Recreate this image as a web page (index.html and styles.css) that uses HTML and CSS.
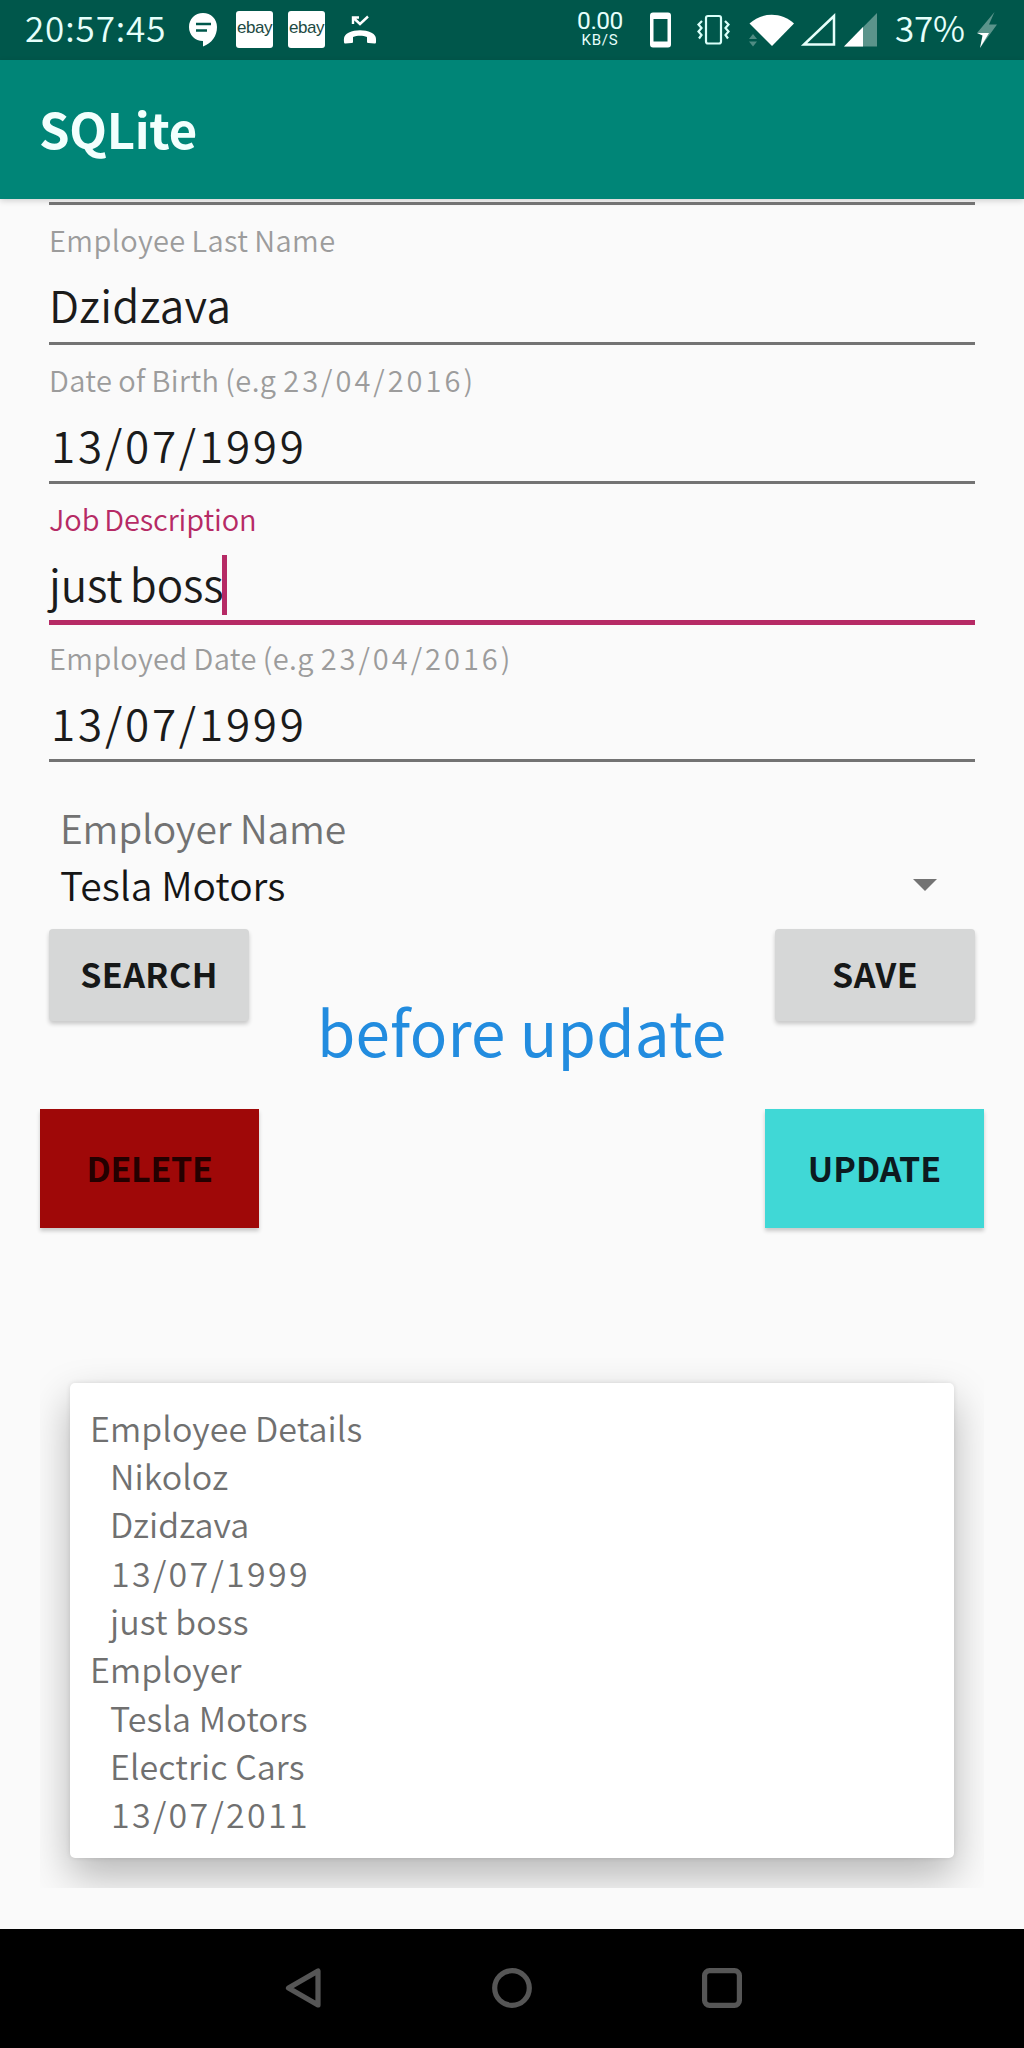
FILE: index.html
```html
<!DOCTYPE html>
<html lang="en">
<head>
<meta charset="utf-8">
<title>SQLite</title>
<link rel="stylesheet" href="styles.css">
</head>
<body>
<div class="screen">
  <header class="status-bar">
    <span class="clock">20:57:45</span>
    <svg class="chat-icon" width="30" height="36" viewBox="0 0 30 36">
      <path d="M15 1C7 1 1 7 1 15s6 14 14 14v5.500C24 31 29 24 29 15 29 7 23 1 15 1Z" fill="#fff"/>
      <path d="M8 12h15M8 18.500h11" stroke="#00574b" stroke-width="2.400"/>
    </svg>
    <span class="ebay">ebay</span>
    <span class="ebay">ebay</span>
    <svg class="missed-icon" width="34" height="30" viewBox="0 0 34 30">
      <path d="M10 2.500 17 9 25 1.500M10 9V2.500h6" fill="none" stroke="#fff" stroke-width="2.400"/>
      <path d="M1 27c-.5-5.500 1-7.500 5-9.500 6-3 16-3 22 0 4 2 5.500 4 5 9.500 0 1-.5 1.500-1.500 1.500l-6-.5c-1 0-1.500-.5-1.500-1.500v-4.500c-4-1.800-10-1.800-14 0v4.500c0 1-.5 1.500-1.500 1.500l-6 .5c-1 0-1.500-.5-1.500-1.500Z" fill="#fff"/>
    </svg>
    <span class="speed"><b>0.00</b><small>KB/S</small></span>
    <svg class="signal-icons" width="236" height="40" viewBox="0 0 236 40">
      <path fill="#fff" fill-rule="evenodd" d="M4 2.500h15a3 3 0 0 1 3 3v29a3 3 0 0 1-3 3H4a3 3 0 0 1-3-3v-29a3 3 0 0 1 3-3ZM4.500 9v22.500h14V9Z"/>
      <rect x="57" y="6" width="15" height="27.500" rx="2" fill="none" stroke="#d9fff9" stroke-width="2.200"/>
      <path d="M53 10.500 49.500 14l3 3.500-3 3.500 3 3.500-2.500 3.500M76 10.500l3.500 3.500-3 3.500 3 3.500-3 3.500 2.500 3.500" transform="translate(0 .5)" fill="none" stroke="#d9fff9" stroke-width="2.200"/>
      <path d="M100.500 13.500C112.500 1.800 133 1.800 145 13.500L123 36Z" fill="#fff"/>
      <path d="m100 29 4-5 4 5zM100 31.500l4 5 4-5z" fill="#4f8c83"/>
      <path d="M155 34.500h30V6Z" fill="none" stroke="#e6fffb" stroke-width="2.500"/>
      <path d="M195 36.500h33V3Z" fill="#5b948b"/>
      <path d="M195 36.500h19V17Z" fill="#fff"/>
    </svg>
    <span class="battery">37%</span>
    <svg class="bolt-icon" width="22" height="38" viewBox="0 0 22 38">
      <path d="M18.500 1 1 22h10L4 37 21 13.500H13Z" fill="#5b948b"/>
      <path d="M1 22h12L4 37l2.500-12.500Z" fill="#fff"/>
    </svg>
  </header>

  <div class="app-bar"><h1>SQLite</h1></div>

  <main class="content">
    <form class="form">
      <div class="field-end"></div>
      <div class="field"><label>Employee Last Name</label><div class="value">Dzidzava</div></div>
      <div class="field"><label>Date of Birth (e.g <span class="date-hint">23/04/2016)</span></label><div class="value date">13/07/1999</div></div>
      <div class="field focused"><label>Job Description</label><div class="value">just boss<i class="caret"></i></div></div>
      <div class="field"><label>Employed Date (e.g <span class="date-hint">23/04/2016)</span></label><div class="value date">13/07/1999</div></div>

      <div class="spinner-label">Employer Name</div>
      <div class="spinner"><span>Tesla Motors</span><i class="arrow"></i></div>

      <div class="actions">
        <button type="button" class="btn">SEARCH</button>
        <button type="button" class="btn">SAVE</button>
      </div>
      <div class="note">before update</div>
    </form>

    <div class="actions-flat">
      <button type="button" class="btn delete">DELETE</button>
      <button type="button" class="btn update">UPDATE</button>
    </div>

    <div class="card-area">
      <section class="card">
        <p>Employee Details</p>
        <p class="sub">Nikoloz</p>
        <p class="sub">Dzidzava</p>
        <p class="sub numeric">13/07/1999</p>
        <p class="sub">just boss</p>
        <p>Employer</p>
        <p class="sub">Tesla Motors</p>
        <p class="sub">Electric Cars</p>
        <p class="sub numeric">13/07/2011</p>
      </section>
    </div>
  </main>

  <nav class="nav-bar">
    <svg width="40" height="44" viewBox="0 0 40 44"><path d="M4.500 22 34 5V39Z" fill="none" stroke="#565656" stroke-width="5.200" stroke-linejoin="round"/></svg>
    <svg width="44" height="44" viewBox="0 0 44 44"><circle cx="22" cy="22" r="17.300" fill="none" stroke="#565656" stroke-width="5.200"/></svg>
    <svg width="44" height="44" viewBox="0 0 44 44"><rect x="4.600" y="4.600" width="34.800" height="34.800" rx="5" fill="none" stroke="#565656" stroke-width="5.200"/></svg>
  </nav>
</div>
</body>
</html>
```
FILE: styles.css
```css
* { box-sizing: border-box; }
body, h1, p { margin: 0; }
body {
  font-family: "Noto Sans CJK SC", "Noto Sans", sans-serif;
  font-weight: 350;
  background: #fafafa;
}
.screen {
  width: 1024px;
  height: 2048px;
  display: flex;
  flex-direction: column;
  overflow: hidden;
}
svg { display: block; flex: none; }

/* Status bar */
.status-bar {
  flex: none;
  height: 59.500px;
  background: #00574b;
  color: #e6fffb;
  display: flex;
  align-items: center;
  white-space: nowrap;
}
.clock {
  flex: none;
  width: 163px;
  padding: 0 0 5px 25px;
  font-size: 35px;
  line-height: 54px;
  letter-spacing: .9px;
}
.chat-icon { margin-left: 25px; }
.ebay {
  width: 37px;
  height: 37px;
  margin-left: 18px;
  border-radius: 3px;
  background: #fff;
  color: #1d4a43;
  font: 400 17px/33px "Liberation Sans", sans-serif;
  letter-spacing: -.5px;
  text-align: center;
}
.ebay + .ebay { margin-left: 15px; }
.missed-icon { margin-left: 18px; }
.speed {
  width: 48px;
  margin-left: 199px;
  display: flex;
  flex-direction: column;
  align-items: center;
  font-family: Roboto, sans-serif;
}
.speed b { font-weight: 400; font-size: 24.500px; line-height: 22px; letter-spacing: -.5px; }
.speed small { font-weight: 400; font-size: 15px; line-height: 17px; letter-spacing: .8px; }
.signal-icons { margin-left: 25px; }
.battery {
  flex: none;
  width: 80px;
  padding: 0 0 5px 1px;
  margin-left: 9px;
  font-size: 35px;
  line-height: 54px;
  letter-spacing: -.2px;
}
.bolt-icon { margin-left: 2px; }

/* App bar */
.app-bar {
  flex: none;
  height: 139.500px;
  padding: 32px 0 0 39px;
  background: #008577;
  color: #f2fffd;
  position: relative;
  box-shadow: 0 2px 6px rgba(0, 0, 0, .16);
}
.app-bar h1 { font-size: 49px; line-height: 72px; font-weight: 700; letter-spacing: -.3px; }

/* Form */
.content { flex: 1; padding: 0 40px; }
.form { position: relative; padding: 0 9px; }
.field-end { height: 6px; border-bottom: 3px solid #737373; }
.field {
  height: 139.500px;
  padding-top: 14px;
  border-bottom: 3px solid #737373;
  white-space: nowrap;
}
.field label {
  display: block;
  font-size: 29px;
  line-height: 40px;
  letter-spacing: .4px;
  word-spacing: -1px;
  color: #9c9c9c;
}
.date-hint { margin-left: 1px; letter-spacing: 3px; }
.value {
  margin-top: 13px;
  font-size: 44px;
  line-height: 64px;
  letter-spacing: .4px;
  color: #1b1b1b;
}
.value.date { padding-left: 2px; letter-spacing: 2.800px; }
.focused { height: 140.500px; border-bottom: 5px solid #b62a65; }
.focused label { color: #b62a65; letter-spacing: -.1px; word-spacing: -1.500px; }
.focused + .field { height: 137px; padding-top: 12px; }
.caret {
  display: inline-block;
  width: 5px;
  height: 60px;
  margin: -2px 0 0 -1px;
  vertical-align: -13px;
  background: #b62a65;
}
.focused .value { height: 64px; letter-spacing: -.2px; word-spacing: -2px; }

.spinner-label {
  margin: 36px 0 0 11px;
  height: 58px;
  font-size: 39px;
  line-height: 58px;
  letter-spacing: -.2px;
  color: #727272;
}
.spinner {
  height: 56px;
  padding: 0 38px 0 11px;
  display: flex;
  align-items: center;
  justify-content: space-between;
  font-size: 39px;
  color: #151515;
}
.arrow {
  margin-top: 3px;
  border: 12px solid transparent;
  border-top-color: #737373;
  border-bottom: 0;
}
.actions, .actions-flat { display: flex; justify-content: space-between; }
.actions { padding-top: 17px; }
.btn {
  width: 200px;
  height: 92px;
  padding: 0 0 1px;
  border: 0;
  border-radius: 4px;
  background: #d6d7d7;
  color: #161818;
  font: 700 34px/50px "Noto Sans CJK SC", "Noto Sans", sans-serif;
  letter-spacing: .4px;
  box-shadow: 0 3px 4px rgba(0, 0, 0, .2);
}
.note {
  position: absolute;
  left: 277px;
  top: 785px;
  font-size: 62px;
  line-height: 92px;
  font-weight: 400;
  letter-spacing: .2px;
  color: #228cdf;
  white-space: nowrap;
}
.actions-flat { margin-top: 88px; }
.actions-flat .btn { width: 219px; height: 119px; border-radius: 0; padding: 0; letter-spacing: 0; }
.actions-flat .delete { background: #9f0808; color: #240000; letter-spacing: -.3px; }
.actions-flat .update { background: #40d8d6; color: #0c1a20; }

/* Details card; the shadow is cut at the container's edges */
.card-area {
  height: 560px;
  margin-top: 100px;
  padding: 55px 30px 0;
  overflow: hidden;
}
.card {
  height: 475px;
  padding: 21px 20px;
  border-radius: 5px;
  background: #fff;
  color: #707070;
  font-size: 34px;
  line-height: 48.350px;
  letter-spacing: .1px;
  box-shadow: 0 18px 42px rgba(0, 0, 0, .28), 0 0 5px rgba(0, 0, 0, .1);
}
.card .sub { padding-left: 20px; }
.card .numeric { padding-left: 21px; letter-spacing: 2.300px; }

/* Navigation bar */
.nav-bar {
  flex: none;
  height: 119.500px;
  background: #000;
  display: flex;
  justify-content: center;
  align-items: center;
  gap: 166px;
}
.nav-bar svg:first-child { margin-left: 4px; }
```
